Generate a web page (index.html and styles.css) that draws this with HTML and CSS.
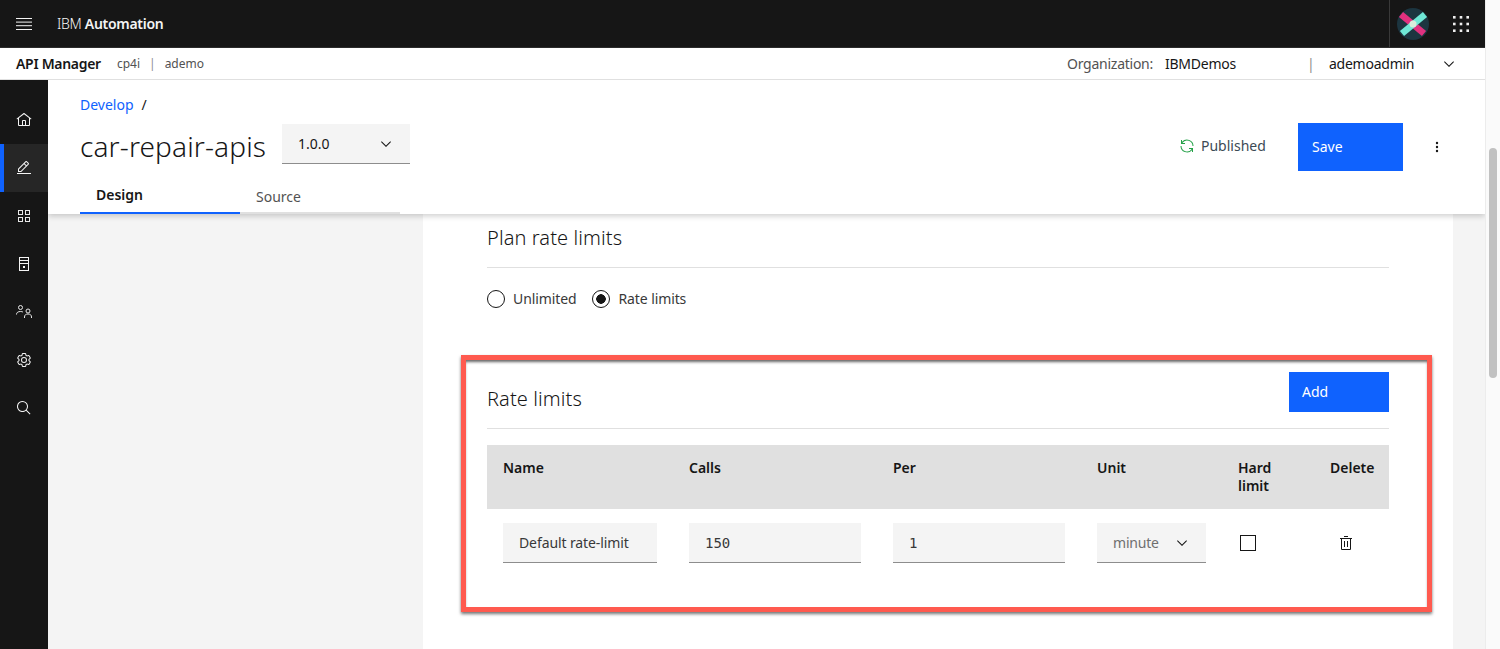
FILE: index.html
```html
<!DOCTYPE html>
<html lang="en">

<head>
  <meta charset="UTF-8">
  <title>API Manager</title>
  <link rel="stylesheet" href="styles.css">
</head>

<body>
  <div class="app">
    <header class="topbar">
      <svg class="icon-hamburger" width="16" height="12" viewBox="0 0 16 12" fill="#f4f4f4">
        <rect y="0" width="16" height="1"></rect>
        <rect y="3.6" width="16" height="1"></rect>
        <rect y="7.2" width="16" height="1"></rect>
        <rect y="11" width="16" height="1"></rect>
      </svg>
      <div class="brand"><span>IBM</span> <b>Automation</b></div>
      <div class="topbar-right">
        <div class="logo-cell">
          <svg width="32" height="32" viewBox="0 0 32 32">
            <circle cx="16" cy="16" r="16" fill="#1c3540"></circle>
            <path d="M4 6.500 L27 25.500" stroke="#e0317f" stroke-width="6.500"></path>
            <path d="M5 25.500 L28 6.500" stroke="#6fe8d6" stroke-width="6.500"></path>
            <circle cx="16" cy="16" r="3.500" fill="#d8eedd"></circle>
          </svg>
        </div>
        <svg class="icon-switcher" width="16" height="16" viewBox="0 0 16 16" fill="#eeeeee">
          <rect width="2.600" height="2.600"></rect><rect x="6.700" width="2.600" height="2.600"></rect><rect x="13.400" width="2.600" height="2.600"></rect>
          <rect y="6.700" width="2.600" height="2.600"></rect><rect x="6.700" y="6.700" width="2.600" height="2.600"></rect><rect x="13.400" y="6.700" width="2.600" height="2.600"></rect>
          <rect y="13.400" width="2.600" height="2.600"></rect><rect x="6.700" y="13.400" width="2.600" height="2.600"></rect><rect x="13.400" y="13.400" width="2.600" height="2.600"></rect>
        </svg>
      </div>
    </header>

    <div class="subbar">
      <b class="product">API Manager</b>
      <span class="crumb">cp4i</span>
      <span class="crumb-sep">|</span>
      <span class="crumb">ademo</span>
      <div class="subbar-right">
        <span class="org-label">Organization:</span>
        <span class="org-name">IBMDemos</span>
        <span class="org-sep">|</span>
        <span class="user-name">ademoadmin</span>
        <svg class="user-chevron" width="16" height="16" viewBox="0 0 32 32" fill="#161616"><path d="M16 22L6 12l1.4-1.4 8.6 8.6 8.6-8.6L26 12z"></path></svg>
      </div>
    </div>

    <div class="workspace">
      <nav class="sidebar">
        <a class="nav-item">
          <svg width="16" height="16" viewBox="0 0 32 32" fill="#f4f4f4"><path d="M16.6123,2.2138a1.01,1.01,0,0,0-1.2427,0L1,13.4194l1.2427,1.5717L4,13.6209V26a2.0041,2.0041,0,0,0,2,2H26a2.0037,2.0037,0,0,0,2-2V13.63L29.7573,15,31,13.4282ZM18,26H14V18h4Zm2,0V18a2.0023,2.0023,0,0,0-2-2H14a2.002,2.002,0,0,0-2,2v8H6V12.0615l10-7.79,10,7.8005V26Z"></path></svg>
        </a>
        <a class="nav-item active">
          <svg width="16" height="16" viewBox="0 0 32 32" fill="#f4f4f4"><path d="M2 26H30V28H2zM25.4 9c.8-.8.8-2 0-2.8l-3.6-3.6c-.8-.8-2-.8-2.8 0l-15 15V24h6.4L25.4 9zM20.4 4L24 7.6l-3 3L17.4 7 20.4 4zM6 22v-3.6l10-10 3.6 3.6-10 10H6z"></path></svg>
        </a>
        <a class="nav-item">
          <svg width="16" height="16" viewBox="0 0 16 16" fill="none" stroke="#e8e8e8">
            <rect x="2.500" y="2.500" width="4" height="4"></rect><rect x="9.500" y="2.500" width="4" height="4"></rect>
            <rect x="2.500" y="9.500" width="4" height="4"></rect><rect x="9.500" y="9.500" width="4" height="4"></rect>
          </svg>
        </a>
        <a class="nav-item">
          <svg width="16" height="16" viewBox="0 0 16 16" fill="none" stroke="#f4f4f4">
            <rect x="3.500" y="1.500" width="9" height="13"></rect>
            <path d="M3.500 4.500h9M3.500 7.500h9"></path>
            <rect x="7" y="10" width="2" height="2" fill="#f4f4f4" stroke="none"></rect>
          </svg>
        </a>
        <a class="nav-item">
          <svg width="16" height="16" viewBox="0 0 16 16" fill="none" stroke="#e8e8e8">
            <circle cx="4.500" cy="3.500" r="2"></circle>
            <path d="M0.500 10.500c0-2 1.500-3 4-3 1 0 1.800.2 2.400.5"></path>
            <circle cx="12" cy="7" r="2"></circle>
            <path d="M8.500 14v-1c0-2 1.300-3 3.500-3s3.500 1 3.500 3v1"></path>
          </svg>
        </a>
        <a class="nav-item">
          <svg width="16" height="16" viewBox="0 0 32 32" fill="#f4f4f4"><path d="M27,16.76c0-.25,0-.5,0-.76s0-.51,0-.77l1.92-1.68A2,2,0,0,0,29.3,11L26.94,7a2,2,0,0,0-1.73-1,2,2,0,0,0-.64.1l-2.43.82a11.35,11.35,0,0,0-1.31-.75l-.51-2.52a2,2,0,0,0-2-1.61H13.64a2,2,0,0,0-2,1.61l-.51,2.52a11.48,11.48,0,0,0-1.32.75L7.43,6.06A2,2,0,0,0,6.79,6,2,2,0,0,0,5.06,7L2.7,11a2,2,0,0,0,.41,2.51L5,15.24c0,.25,0,.5,0,.76s0,.51,0,.77L3.11,18.45A2,2,0,0,0,2.7,21L5.06,25a2,2,0,0,0,1.73,1,2,2,0,0,0,.64-.1l2.43-.82a11.35,11.35,0,0,0,1.31.75l.51,2.52a2,2,0,0,0,2,1.61h4.72a2,2,0,0,0,2-1.61l.51-2.52a11.48,11.48,0,0,0,1.32-.75l2.42.82a2,2,0,0,0,.64.1,2,2,0,0,0,1.73-1L29.3,21a2,2,0,0,0-.41-2.51ZM25.21,24l-3.43-1.16a8.86,8.86,0,0,1-2.71,1.57L18.36,28H13.64l-.71-3.55a9.36,9.36,0,0,1-2.7-1.57L6.79,24,4.43,20l2.72-2.4a8.9,8.9,0,0,1,0-3.13L4.43,12,6.79,8l3.43,1.16a8.86,8.86,0,0,1,2.71-1.57L13.64,4h4.72l.71,3.55a9.36,9.36,0,0,1,2.7,1.57L25.21,8,27.57,12l-2.72,2.4a8.9,8.9,0,0,1,0,3.13L27.57,20Z"></path><path d="M16,22a6,6,0,1,1,6-6A5.94,5.94,0,0,1,16,22Zm0-10a3.91,3.91,0,0,0-4,4,3.91,3.91,0,0,0,4,4,3.91,3.91,0,0,0,4-4A3.91,3.91,0,0,0,16,12Z"></path></svg>
        </a>
        <a class="nav-item">
          <svg width="16" height="16" viewBox="0 0 32 32" fill="#f4f4f4"><path d="M29,27.5859l-7.5521-7.5521a11.0177,11.0177,0,1,0-1.4141,1.4141L27.5859,29ZM4,13a9,9,0,1,1,9,9A9.01,9.01,0,0,1,4,13Z"></path></svg>
        </a>
      </nav>

      <main class="main">
        <section class="page-header">
          <div class="page-header-left">
            <div class="breadcrumb"><a>Develop</a><span>/</span></div>
            <div class="title-row">
              <h1>car-repair-apis</h1>
              <div class="select version-select">
                <span>1.0.0</span>
                <svg width="16" height="16" viewBox="0 0 32 32" fill="#161616"><path d="M16 22L6 12l1.4-1.4 8.6 8.6 8.6-8.6L26 12z"></path></svg>
              </div>
            </div>
            <div class="tabs">
              <a class="tab selected">Design</a>
              <a class="tab">Source</a>
            </div>
          </div>
          <div class="page-actions">
            <svg width="16" height="16" viewBox="0 0 32 32" fill="#24a148"><path d="M12 10H6.78A11 11 0 0127 16h2A13 13 0 006 7.68V4H4v8h8zM20 22h5.22A11 11 0 015 16H3a13 13 0 0023 8.32V28h2V20H20z"></path></svg>
            <span class="status">Published</span>
            <button class="btn btn-save">Save</button>
            <svg class="icon-kebab" width="16" height="16" viewBox="0 0 16 16" fill="#161616">
              <circle cx="8" cy="4" r="1.200"></circle><circle cx="8" cy="8" r="1.200"></circle><circle cx="8" cy="12" r="1.200"></circle>
            </svg>
          </div>
        </section>

        <div class="content">
          <section class="panel">
            <h2 class="section-title plan-title">Plan rate limits</h2>
            <div class="radios">
              <label class="radio"><i class="radio-dot"></i>Unlimited</label>
              <label class="radio"><i class="radio-dot checked"></i>Rate limits</label>
            </div>

            <div class="rate-head">
              <h2 class="section-title">Rate limits</h2>
              <button class="btn btn-add">Add</button>
            </div>

            <div class="grid grid-head">
              <span>Name</span>
              <span>Calls</span>
              <span>Per</span>
              <span>Unit</span>
              <span>Hard<br>limit</span>
              <span>Delete</span>
            </div>
            <div class="grid grid-row">
              <div class="field">Default rate-limit</div>
              <div class="field mono">150</div>
              <div class="field mono">1</div>
              <div class="select unit-select">
                <span>minute</span>
                <svg width="16" height="16" viewBox="0 0 32 32" fill="#161616"><path d="M16 22L6 12l1.4-1.4 8.6 8.6 8.6-8.6L26 12z"></path></svg>
              </div>
              <div class="checkbox-cell"><i class="checkbox"></i></div>
              <div class="delete-cell">
                <svg width="16" height="16" viewBox="0 0 32 32" fill="#161616"><path d="M12 12H14V24H12zM18 12H20V24H18z"></path><path d="M4 6V8H6V28a2 2 0 002 2H24a2 2 0 002-2V8h2V6zM8 28V8H24V28zM12 2H20V4H12z"></path></svg>
              </div>
            </div>

            <!-- red annotation drawn over the screenshot -->
            <div class="callout"></div>
          </section>
        </div>
      </main>
    </div>
  </div>

  <div class="scrollbar"><div class="scrollbar-thumb"></div></div>
</body>

</html>
```

FILE: styles.css
```css
* {
  box-sizing: border-box;
}

html,
body {
  height: 100%;
}

body {
  margin: 0;
  display: flex;
  overflow: hidden;
  font-family: "Noto Sans", "Liberation Sans", sans-serif;
  font-size: 14px;
  color: #161616;
  background: #fff;
}

.app {
  flex: 1;
  min-width: 0;
  display: flex;
  flex-direction: column;
}

/* top black bar */
.topbar {
  height: 48px;
  flex: none;
  display: flex;
  align-items: center;
  background: #161616;
  color: #f4f4f4;
  padding-left: 16px;
  border-bottom: 1px solid #2c2c2c;
}

.brand {
  margin-left: 25px;
  font-size: 14px;
  letter-spacing: -0.3px;
}

.brand span {
  font-weight: 300;
}

.brand b {
  font-weight: 600;
}

.topbar-right {
  margin-left: auto;
  display: flex;
  align-items: center;
  height: 100%;
}

.logo-cell {
  width: 49px;
  height: 100%;
  padding-left: 7px;
  display: flex;
  align-items: center;
  border-left: 1px solid #393939;
}

.icon-switcher {
  margin: 0 16px 0 15px;
}

/* white bar with the product name */
.subbar {
  height: 32px;
  flex: none;
  display: flex;
  align-items: center;
  padding: 0 28px 0 16px;
  background: #fff;
  border-bottom: 1px solid #e0e0e0;
}

.product {
  font-weight: 600;
  font-size: 14px;
  letter-spacing: -0.3px;
  margin-right: 16px;
}

.crumb {
  font-size: 12px;
  color: #525252;
}

.crumb-sep {
  font-size: 12px;
  color: #8d8d8d;
  margin: 0 9px;
}

.subbar-right {
  margin-left: auto;
  display: flex;
  align-items: center;
  letter-spacing: -0.25px;
}

.org-label {
  color: #525252;
  width: 98px;
}

.org-name {
  width: 142px;
}

.org-sep {
  color: #8d8d8d;
  width: 22px;
}

.user-name {
  width: 112px;
}

.workspace {
  flex: 1;
  min-height: 0;
  display: flex;
}

.sidebar {
  width: 48px;
  flex: none;
  padding-top: 16px;
  background: #161616;
}

.nav-item {
  height: 48px;
  display: flex;
  align-items: center;
  justify-content: center;
}

.nav-item.active {
  background: #262626;
  border-left: 4px solid #0f62fe;
  padding-right: 4px;
}

.main {
  flex: 1;
  min-width: 0;
  display: flex;
  flex-direction: column;
  overflow: hidden;
  background: #f4f4f4;
}

/* page header, casts a shadow on the content */
.page-header {
  height: 134px;
  flex: none;
  position: relative;
  z-index: 1;
  display: flex;
  justify-content: space-between;
  padding-left: 32px;
  background: #fff;
  box-shadow: 0 2px 6px rgba(0, 0, 0, 0.2);
}

.breadcrumb {
  height: 44px;
  padding-top: 15px;
  line-height: 20px;
  display: flex;
  gap: 8px;
}

.breadcrumb a {
  color: #0f62fe;
}

.title-row {
  height: 40px;
  display: flex;
  align-items: center;
}

h1 {
  margin: 0;
  padding-top: 3px;
  font-size: 28px;
  font-weight: 300;
  letter-spacing: 0.13px;
  width: 202px;
  white-space: nowrap;
}

.select {
  display: flex;
  align-items: center;
  justify-content: space-between;
  height: 40px;
  background: #f4f4f4;
  border-bottom: 1px solid #8d8d8d;
}

.version-select {
  width: 128px;
  padding: 0 16px;
}

.tabs {
  display: flex;
  margin-top: 8px;
}

.tab {
  width: 160px;
  height: 42px;
  padding: 15px 0 0 16px;
  line-height: 20px;
  color: #525252;
  border-bottom: 2px solid #e0e0e0;
}

.tab.selected {
  padding-top: 13px;
  font-weight: 600;
  color: #161616;
  border-bottom-color: #0f62fe;
}

.page-actions {
  display: flex;
  align-items: flex-start;
  padding: 43px 40px 0 0;
}

.page-actions > svg:first-child {
  margin: 15px 6px 0 0;
}

.status {
  width: 97px;
  margin-top: 13px;
  color: #3c4a55;
}

.btn {
  display: block;
  border: 0;
  padding: 0 0 2px 13px;
  text-align: left;
  font: inherit;
  color: #fff;
  background: #0f62fe;
}

.btn-save {
  width: 105px;
  height: 48px;
  padding-left: 14px;
}

.icon-kebab {
  margin: 16px 0 0 26px;
}

/* scrolled content */
.content {
  flex: 1;
  min-height: 0;
  overflow: hidden;
  padding-left: 375px;
}

.panel {
  position: relative;
  width: 1030px;
  height: 100%;
  padding: 10px 64px 0;
  background: #fff;
}

.section-title {
  margin: 0;
  font-size: 20px;
  font-weight: 300;
  letter-spacing: 0.1px;
  line-height: 28px;
}

.plan-title {
  height: 44px;
  border-bottom: 1px solid #e0e0e0;
}

.radios {
  display: flex;
  gap: 16px;
  margin-top: 22px;
}

.radio {
  display: flex;
  align-items: flex-start;
  gap: 8px;
  height: 18px;
  line-height: 17px;
  letter-spacing: -0.1px;
  color: #393939;
}

.radio-dot {
  width: 18px;
  height: 18px;
  border: 1px solid #161616;
  border-radius: 50%;
}

.radio-dot.checked {
  background: radial-gradient(circle, #161616 0 4.500px, transparent 5px);
}

.rate-head {
  display: flex;
  justify-content: space-between;
  align-items: flex-end;
  height: 57px;
  margin-top: 64px;
  border-bottom: 1px solid #e0e0e0;
}

.rate-head .section-title {
  padding-bottom: 15px;
}

.btn-add {
  width: 100px;
  height: 40px;
  margin-bottom: 16px;
}

.grid {
  display: grid;
  grid-template-columns: 186px 204px 204px 141px 92px 1fr;
  padding-left: 16px;
}

.grid-head {
  height: 64px;
  margin-top: 16px;
  padding-top: 14px;
  font-weight: 600;
  line-height: 18px;
  background: #e0e0e0;
}

.grid-row {
  margin-top: 14px;
  align-items: center;
}

.field {
  height: 40px;
  width: 172px;
  padding-left: 16px;
  line-height: 40px;
  letter-spacing: -0.1px;
  color: #393939;
  background: #f4f4f4;
  border-bottom: 1px solid #8d8d8d;
}

.grid-row .field:first-child {
  width: 154px;
  white-space: nowrap;
}

.mono {
  font-family: "DejaVu Sans Mono", "Liberation Mono", monospace;
  letter-spacing: 0;
  font-size: 14px;
}

.unit-select {
  width: 109px;
  padding: 0 16px;
  letter-spacing: -0.2px;
  color: #6f6f6f;
}

.checkbox {
  display: block;
  width: 16px;
  height: 16px;
  margin-left: 2px;
  border: 1px solid #161616;
}

.delete-cell svg {
  display: block;
  margin-left: 8px;
}

/* red box over the rate limit table */
.callout {
  position: absolute;
  top: 141px;
  left: 38px;
  width: 971px;
  height: 257px;
  border: 5px solid #ff5a4f;
  box-shadow: 0 2px 3px rgba(0, 0, 0, 0.55), inset 0 3px 3px -1px rgba(0, 0, 0, 0.6);
}

/* browser scrollbar */
.scrollbar {
  width: 15px;
  flex: none;
  position: relative;
  background: #fafafa;
  border-left: 1px solid #ececec;
}

.scrollbar-thumb {
  position: absolute;
  top: 148px;
  left: 3px;
  width: 8px;
  height: 230px;
  border-radius: 4px;
  background: #c1c1c1;
}
```
